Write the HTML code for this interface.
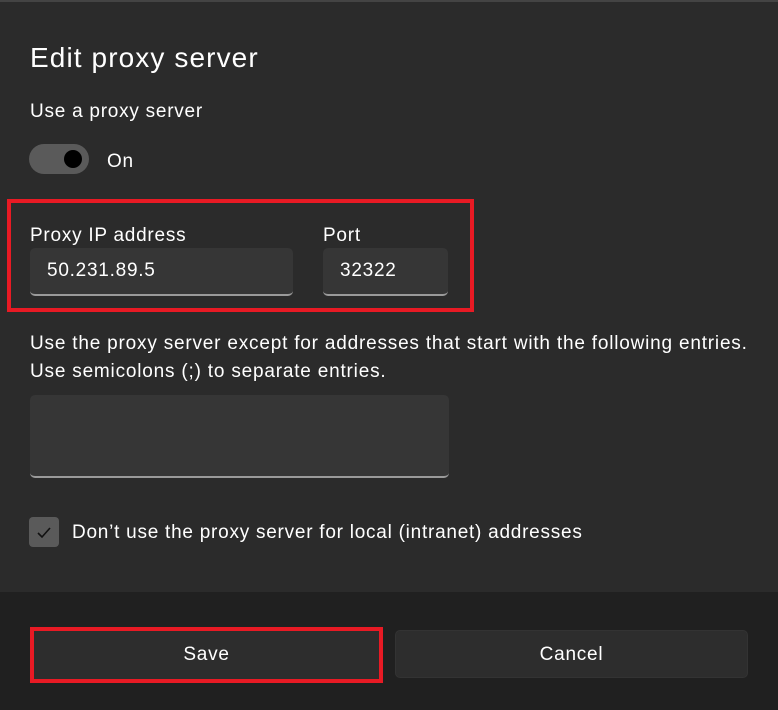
<!DOCTYPE html>
<html><head><style>
body{margin:0;width:778px;height:710px;background:#2b2b2b;font-family:"Liberation Sans",sans-serif;color:#fff;position:relative;overflow:hidden;letter-spacing:0.75px}
.a{position:absolute}
.in{position:absolute;background:#363636;border-radius:5px;border-bottom:2px solid #9a9a9a;box-sizing:border-box;font-size:19px;line-height:46px;padding-left:17px}
</style></head><body>
<div class="a" style="top:0;left:0;width:778px;height:2px;background:#444"></div>
<div class="a" style="left:30px;top:42px;font-size:28px;letter-spacing:1.1px">Edit proxy server</div>
<div class="a" style="left:30px;top:101px;font-size:19px">Use a proxy server</div>
<div class="a" style="left:29px;top:144px;width:60px;height:30px;border-radius:15px;background:#5a5a5a"></div>
<div class="a" style="left:64px;top:150px;width:18px;height:18px;border-radius:9px;background:#000"></div>
<div class="a" style="left:107px;top:151px;font-size:19px">On</div>
<div class="a" style="left:7px;top:199px;width:459px;height:105px;border:4px solid #e81a24"></div>
<div class="a" style="left:30px;top:225px;font-size:19px">Proxy IP address</div>
<div class="a" style="left:323px;top:225px;font-size:19px">Port</div>
<div class="in" style="left:30px;top:248px;width:263px;height:48px">50.231.89.5</div>
<div class="in" style="left:323px;top:248px;width:125px;height:48px">32322</div>
<div class="a" style="left:30px;top:330px;font-size:19px;line-height:28px;letter-spacing:0.8px">Use the proxy server except for addresses that start with the following entries.<br>Use semicolons (;) to separate entries.</div>
<div class="in" style="left:30px;top:395px;width:419px;height:83px"></div>
<div class="a" style="left:29px;top:517px;width:30px;height:30px;border-radius:4px;background:#5a5a5a"><svg width="30" height="30"><path d="M9 16l4 4 8-9" stroke="#111" stroke-width="1.6" fill="none"/></svg></div>
<div class="a" style="left:72px;top:522px;font-size:19px">Don’t use the proxy server for local (intranet) addresses</div>
<div class="a" style="left:0;top:592px;width:778px;height:118px;background:#202020"></div>
<div class="a" style="left:34px;top:631px;width:345px;height:48px;background:#2d2d2d;text-align:center;line-height:48px;font-size:19px">Save</div>
<div class="a" style="left:30px;top:627px;width:345px;height:48px;border:4px solid #e81a24"></div>
<div class="a" style="left:395px;top:630px;width:353px;height:48px;background:#2d2d2d;border:1px solid #333;border-radius:5px;box-sizing:border-box;text-align:center;line-height:48px;font-size:19px">Cancel</div>
</body></html>
